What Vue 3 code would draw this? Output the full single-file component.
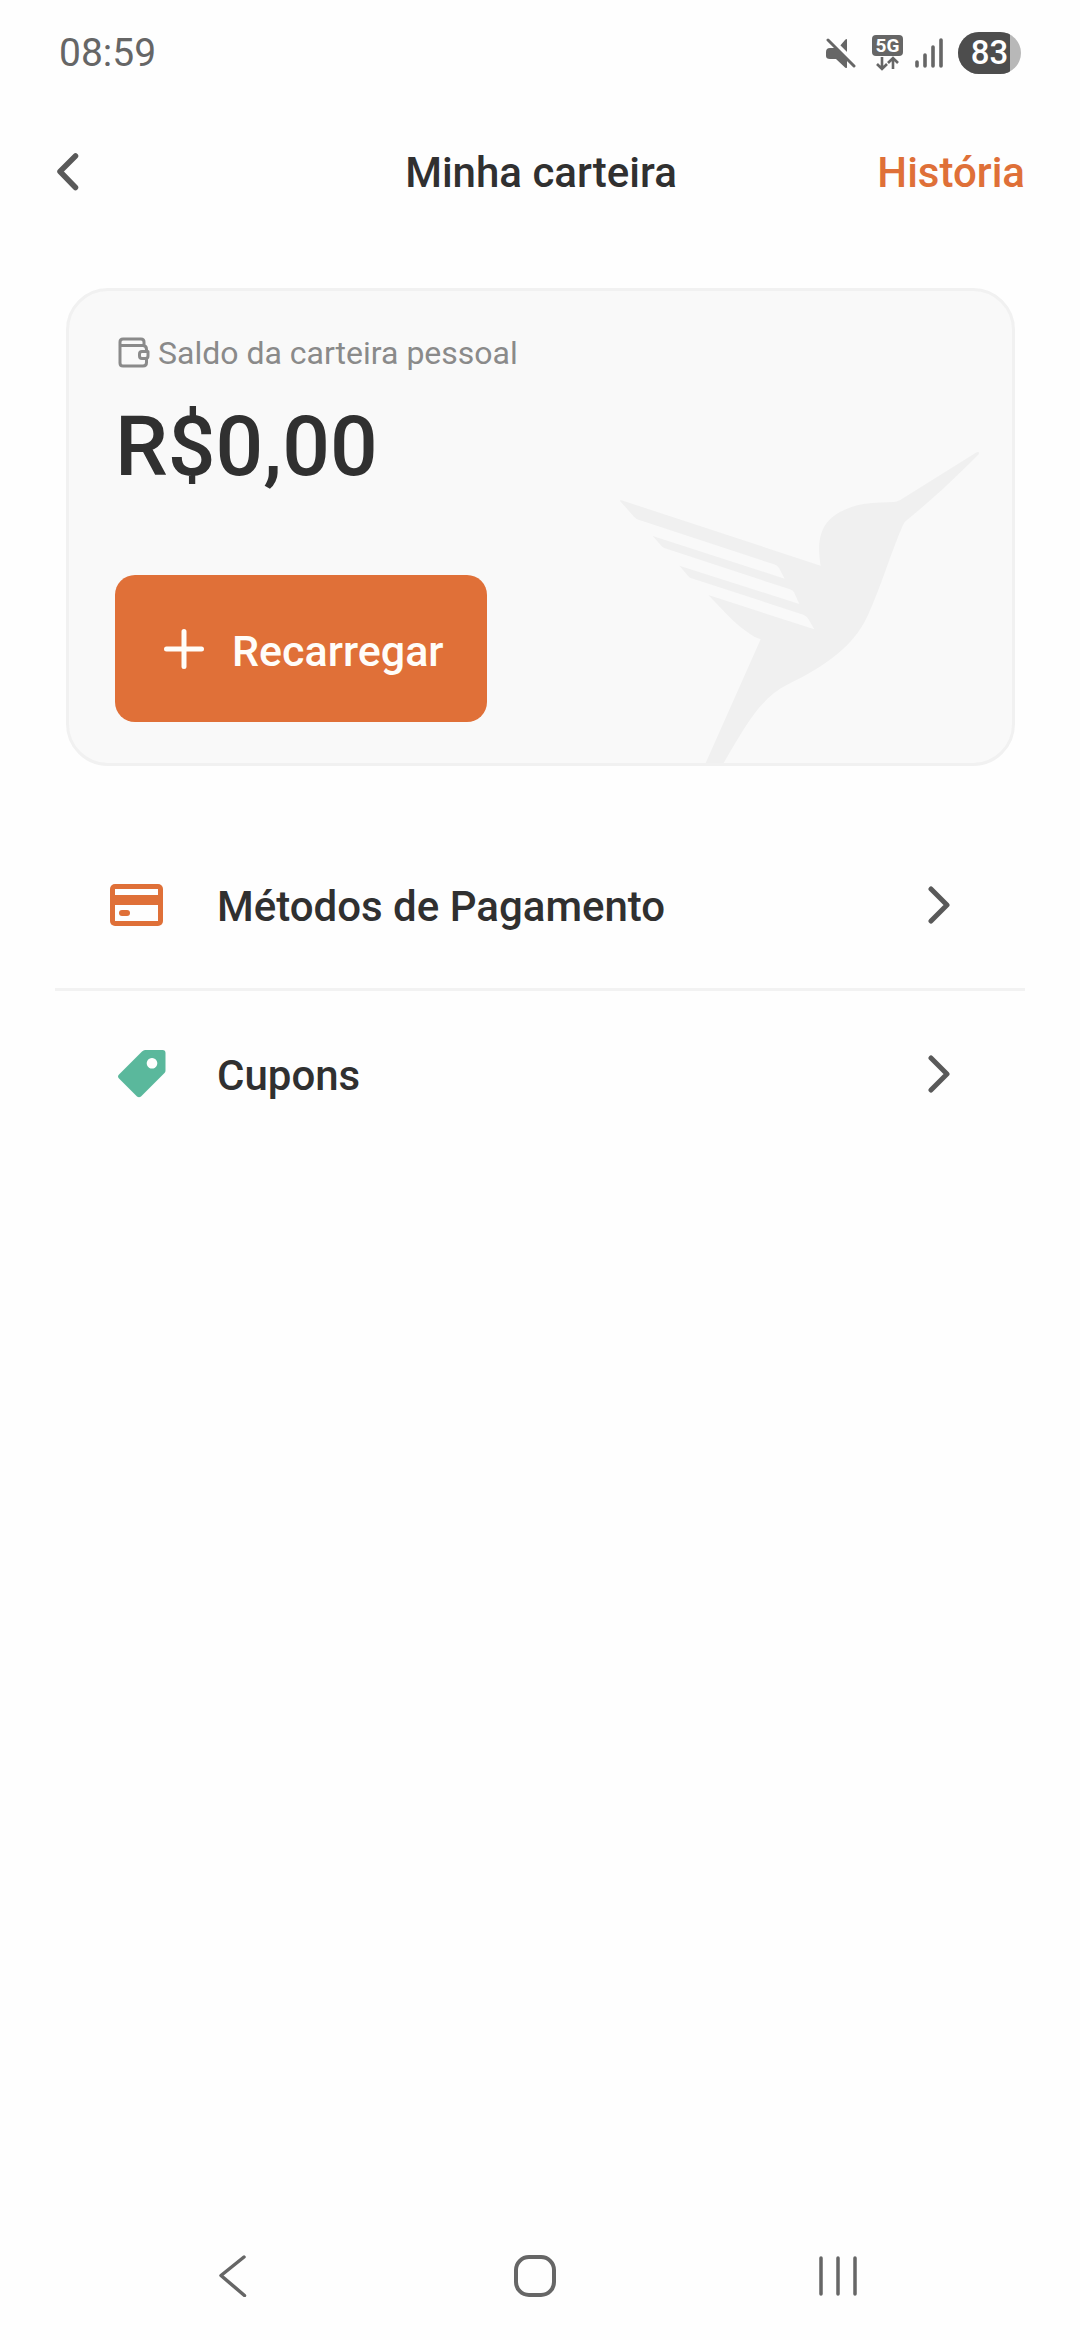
<script setup>
const charge = 83
const items = [
  { id: 'payment', label: 'Métodos de Pagamento' },
  { id: 'coupons', label: 'Cupons' }
]
</script>

<template>
  <div class="screen">
    <div class="status">
      <time class="clock">08:59</time>
      <div class="indicators">
        <svg class="mute" viewBox="0 0 30 30" width="30" height="30" aria-hidden="true">
          <path d="M0 14q0-4 4-4h5l12 12v7q0 2-2 .500L10 21H4q-4 0-4-3zM13 9l6-7q2-2 2 0v15z" fill="#666" />
          <path d="M4 -1l27 27" stroke="#fefefe" stroke-width="3" />
          <path d="M2 2l26 26" stroke="#666" stroke-width="3" stroke-linecap="round" />
        </svg>
        <div class="network">
          <span class="network-label">5G</span>
          <svg viewBox="0 0 31 15" width="31" height="15" aria-hidden="true">
            <path d="M10 1v12M5 8l5 5 5-5M21 13V2M16 7l5-5 5 5" fill="none" stroke="#666" stroke-width="2.6" />
          </svg>
        </div>
        <svg class="signal" viewBox="0 0 28 30" width="28" height="30" aria-hidden="true">
          <path d="M2 24v4M10 17v11M18 9v19M26 2v26" stroke="#666" stroke-width="3.6" stroke-linecap="round" />
        </svg>
        <div class="battery">
          <div class="battery-level" :style="{ width: charge + '%' }"></div>
          <span class="battery-text">{{ charge }}</span>
        </div>
      </div>
    </div>

    <header class="header">
      <button class="back" type="button" aria-label="Voltar">
        <svg viewBox="0 0 22 38" width="22" height="38" aria-hidden="true">
          <path d="M18.500 3L3 18.500 18.500 34.500" fill="none" stroke="#595959" stroke-width="5.500" stroke-linecap="round" stroke-linejoin="round" />
        </svg>
      </button>
      <h1 class="title">Minha carteira</h1>
      <a class="history" href="#historia">História</a>
    </header>

    <main class="content">
      <section class="wallet">
        <svg class="bird" viewBox="60 90 1080 939" width="360" height="313" aria-hidden="true">
          <path
            d="M62 240L662 437C646 345 672 298 728 272C786 244 830 249 880 246Q890 246 902 239L1130 97Q1140 94 1136 103C1065 175 1000 236 922 299Q914 304 909 315C870 405 843 500 803 587C760 680 680 735 560 795C490 830 445 900 371 1029H317L482 658Q467 655 450 642C405 612 370 572 325 525L643 628L625 597Q620 588 610 584L272 474Q268 473 264 467L238 437L598 552L582 517Q579 511 570 508L195 385Q188 382 184 377L158 348L554 476L537 444Q533 436 522 433L118 300Q108 297 102 290L60 243Z"
            fill="#f0f0f0"
          />
        </svg>
        <p class="caption">
          <svg class="caption-icon" viewBox="0 0 32 32" width="32" height="32" aria-hidden="true">
            <g fill="none" stroke="#8a8a8a" stroke-width="3" stroke-linejoin="round">
              <path d="M26 8V5q0-3-3-3H5Q2 2 2 5v21q0 3 3 3h20q3.500 0 3.500-3.500V22M2.500 8.500H25q3.500 0 3.500 4v2" />
              <path d="M30 14.500h-6q-2.500 0-2.500 2.500v2q0 2.500 2.500 2.500h3.500q2.500 0 2.500-2.500z" />
            </g>
          </svg>
          <span>Saldo da carteira pessoal</span>
        </p>
        <p class="balance">R$0,00</p>
        <button class="recharge" type="button">
          <svg viewBox="0 0 40 40" width="40" height="40" aria-hidden="true">
            <path d="M20 2.500v35M2.500 20h35" stroke="#fffdf9" stroke-width="5" stroke-linecap="round" />
          </svg>
          <span class="recharge-label">Recarregar</span>
        </button>
      </section>

      <nav class="menu">
        <a v-for="item in items" :key="item.id" class="row" :href="'#' + item.id">
          <span class="row-icon">
            <svg v-if="item.id === 'payment'" viewBox="0 0 53 42" width="53" height="42" aria-hidden="true">
              <rect width="53" height="42" rx="5" fill="#df7038" />
              <path d="M5 5h43v6H5zM5 21h43v16H5z" fill="#fefefe" />
              <rect x="9" y="26" width="11" height="6" rx="3" fill="#df7038" />
            </svg>
            <svg v-else class="tag" viewBox="0 0 48 48" width="48" height="48" aria-hidden="true">
              <path d="M27 0h17.500Q47.500 0 47.500 3v17.500Q47.500 22 46.500 23L23 46.500q-2 1.500-4 0L1 28.500q-2-2 0-4L24 1.500Q25.500 0 27 0zM34 8a5.300 5.300 0 1 0 .01 0z" fill="#5ab89c" fill-rule="evenodd" />
            </svg>
          </span>
          <span class="row-label">{{ item.label }}</span>
          <svg viewBox="0 0 22 38" width="22" height="38" aria-hidden="true">
            <path d="M3 3l16 16L3 35" fill="none" stroke="#595959" stroke-width="5" stroke-linecap="round" stroke-linejoin="round" />
          </svg>
        </a>
      </nav>
    </main>

    <footer class="system-bar">
      <button type="button" aria-label="Voltar">
        <svg viewBox="0 0 28 42" width="28" height="42" aria-hidden="true">
          <path d="M25 2L2 20.500 25.500 40.500" fill="none" stroke="#666" stroke-width="3.500" stroke-linecap="round" stroke-linejoin="round" />
        </svg>
      </button>
      <button type="button" aria-label="Início">
        <svg viewBox="0 0 42 42" width="42" height="42" aria-hidden="true">
          <rect x="2" y="2" width="38" height="38" rx="13" fill="none" stroke="#666" stroke-width="4" />
        </svg>
      </button>
      <button type="button" aria-label="Recentes">
        <svg viewBox="0 0 38 40" width="38" height="40" aria-hidden="true">
          <path d="M2 2v36M19 2v36M36 2v36" stroke="#666" stroke-width="3.500" stroke-linecap="round" />
        </svg>
      </button>
    </footer>
  </div>
</template>

<style>
body {
  background: #fefefe;
}
</style>

<style scoped>
.screen {
  min-height: 100vh;
  display: flex;
  flex-direction: column;
  background: #fefefe;
  color: #303030;
  font-family: Roboto, sans-serif;
}

button {
  border: 0;
  padding: 0;
  background: none;
  font: inherit;
  cursor: pointer;
}

a {
  color: inherit;
  text-decoration: none;
}

svg {
  display: block;
  flex: none;
}

.status {
  height: 106px;
  padding: 0 59px;
  display: flex;
  align-items: center;
  justify-content: space-between;
}

.clock {
  font-size: 39px;
  line-height: 48px;
  color: #666;
}

.indicators {
  display: flex;
  align-items: center;
  gap: 14px;
}

.network {
  display: flex;
  flex-direction: column;
  margin: 0 1px 0 2px;
}

.network-label {
  width: 31px;
  border-radius: 4px;
  background: #666;
  color: #fefefe;
  font-size: 19px;
  line-height: 21px;
  font-weight: 700;
  text-align: center;
}

.signal {
  margin: 0 1px 0 -3px;
}

.battery {
  position: relative;
  width: 63px;
  height: 42px;
  border-radius: 21px;
  overflow: hidden;
  background: #b8b8b8;
  display: flex;
  align-items: center;
  justify-content: center;
}

.battery-level {
  position: absolute;
  top: 0;
  bottom: 0;
  left: 0;
  background: #4d4d4d;
}

.battery-text {
  position: relative;
  font-size: 33px;
  line-height: 42px;
  font-weight: 500;
  color: #fff;
}

.header {
  height: 132px;
  padding: 0 55px 0 57px;
  display: grid;
  grid-template-columns: 1fr auto 1fr;
  align-items: center;
  font-size: 42px;
  line-height: 50px;
  font-weight: 500;
}

.back,
.history {
  justify-self: start;
}

.title,
.history {
  padding-top: 2px;
}

.title {
  margin: 0;
  font: inherit;
}

.history {
  justify-self: end;
  color: #df7038;
}

.content {
  flex: 1;
  padding: 50px 55px 0;
}

.wallet {
  position: relative;
  margin: 0 10px 0 11px;
  padding: 44px 46px 41px;
  border: 3px solid #f1f1f1;
  border-radius: 42px;
  background: #f9f9f9;
  overflow: hidden;
}

.bird {
  position: absolute;
  right: 32px;
  bottom: 0;
}

.caption {
  margin: 0;
  display: flex;
  align-items: center;
  gap: 8px;
  padding-left: 3px;
  font-size: 32px;
  line-height: 36px;
  color: #8a8a8a;
}

.balance {
  margin: 22px 0 74px;
  font-size: 84px;
  line-height: 108px;
  font-weight: 500;
}

.recharge {
  position: relative;
  height: 147px;
  padding: 0 43px 0 49px;
  display: flex;
  align-items: center;
  gap: 28px;
  border-radius: 20px;
  background: #e07038;
  color: #fffdf9;
  font-size: 43px;
  line-height: 50px;
  font-weight: 500;
}

.menu {
  margin-top: 56px;
}

.row {
  height: 166px;
  padding: 0 75px 0 55px;
  display: flex;
  align-items: center;
  font-size: 42px;
  line-height: 50px;
  font-weight: 500;
}

.row + .row {
  border-top: 3px solid #f2f2f2;
}

.row-icon {
  width: 107px;
}

.tag {
  margin-left: 8px;
}

.row-label {
  flex: 1;
}

.row-label,
.recharge-label {
  padding-top: 4px;
}

.system-bar {
  height: 128px;
  padding: 0 91px 0 82px;
  display: flex;
}

.system-bar button {
  flex: 1;
  display: flex;
  align-items: center;
  justify-content: center;
}
</style>
